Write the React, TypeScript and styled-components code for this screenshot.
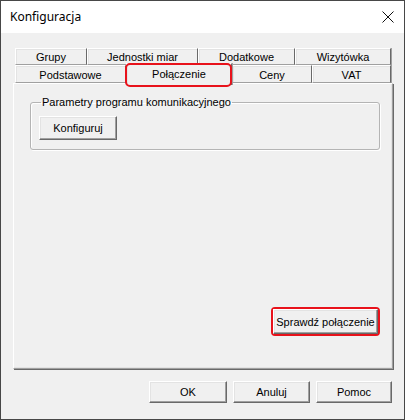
import styled, { createGlobalStyle } from "styled-components";

interface TabProps {
  w: number;
  active?: boolean;
  marked?: boolean;
}

const topTabs = [
  { label: "Grupy", w: 72 },
  { label: "Jednostki miar", w: 111 },
  { label: "Dodatkowe", w: 97 },
  { label: "Wizytówka", w: 96 },
];

const bottomTabs = [
  { label: "Podstawowe", w: 111 },
  { label: "Połączenie", w: 106, active: true },
  { label: "Ceny", w: 80 },
  { label: "VAT", w: 79 },
];

const App = () => {
  return (
    <>
      <GlobalStyle />
      <Window>
        <TitleBar>
          <Title>Konfiguracja</Title>
          <CloseButton>
            <svg width="12" height="12" viewBox="0 0 12 12">
              <path d="M0.5 0.5 L11.5 11.5 M11.5 0.5 L0.5 11.5" stroke="#111" strokeWidth="1" fill="none" />
            </svg>
          </CloseButton>
        </TitleBar>
        <Body>
          <TabStrip>
            <TabRow>
              {topTabs.map((t) => (
                <Tab key={t.label} w={t.w}>
                  {t.label}
                </Tab>
              ))}
            </TabRow>
            <TabRow>
              {bottomTabs.map((t) => (
                <Tab key={t.label} w={t.w} active={t.active} marked={t.active}>
                  {t.label}
                </Tab>
              ))}
            </TabRow>
          </TabStrip>
          <Panel>
            <Group>
              <Legend>Parametry programu komunikacyjnego</Legend>
              <Button w={78} h={24}>Konfiguruj</Button>
            </Group>
            <PanelFooter>
              <Highlight>
                <Button w={105} h={25}>Sprawdź połączenie</Button>
              </Highlight>
            </PanelFooter>
          </Panel>
          <DialogButtons>
            <Button w={78} h={22}>OK</Button>
            <Button w={77} h={22}>Anuluj</Button>
            <Button w={76} h={22}>Pomoc</Button>
          </DialogButtons>
        </Body>
      </Window>
    </>
  );
};

const GlobalStyle = createGlobalStyle`
  body {
    margin: 0;
    background: #ffffff;
  }
`;

const Window = styled.div`
  width: 405px;
  height: 420px;
  box-sizing: border-box;
  border: 1px solid #474747;
  display: flex;
  flex-direction: column;
  background: #f0f0f0;
  font-family: "Liberation Sans", Arial, sans-serif;
  font-size: 11px;
  color: #000;
`;

const TitleBar = styled.div`
  height: 32px;
  background: #ffffff;
  display: flex;
  align-items: center;
  padding: 0 0 0 9px;
`;

const Title = styled.div`
  flex: 1;
  font-family: "Noto Sans", "Open Sans", sans-serif;
  font-size: 12px;
  color: #000;
  padding-bottom: 1px;
`;

const CloseButton = styled.div`
  width: 46px;
  height: 32px;
  display: flex;
  align-items: center;
  justify-content: center;
  margin-right: -7px;
`;

const Body = styled.div`
  flex: 1;
  display: flex;
  flex-direction: column;
  padding: 15px 11px 0 12px;
`;

const TabStrip = styled.div`
  display: flex;
  flex-direction: column;
  margin: 0 2px;
  position: relative;
  z-index: 1;
`;

const TabRow = styled.div`
  display: flex;
  height: 17px;

  & + & {
    height: 18px;
  }
`;

const Tab = styled.div<TabProps>`
  position: relative;
  flex: 0 0 ${(p) => p.w}px;
  box-sizing: border-box;
  display: flex;
  align-items: center;
  justify-content: center;
  background: #f0f0f0;
  border: 1px solid #a0a0a0;
  border-right-color: #696969;
  border-left-color: #ffffff;
  border-top-color: #ffffff;
  box-shadow: inset 1px 1px 0 #e3e3e3, 1px 0 0 #a0a0a0;
  padding-top: 1px;
  ${(p) =>
    p.active &&
    `
    margin-top: -2px;
    height: 22px;
    border-bottom: none;
    padding-bottom: 2px;
    z-index: 2;
  `}

  ${(p) =>
    p.marked &&
    `
    &::after {
      content: "";
      position: absolute;
      left: -2px;
      right: -1px;
      top: -1px;
      bottom: -2px;
      border: 2px solid #e8121b;
      border-radius: 5px;
    }
  `}
`;

const Panel = styled.div`
  height: 286px;
  box-sizing: border-box;
  display: flex;
  flex-direction: column;
  border: 1px solid #a0a0a0;
  border-top-color: #ffffff;
  border-left-color: #ffffff;
  box-shadow: inset -1px -1px 0 #e3e3e3, 1px 1px 0 #696969;
  padding: 12px 12px 32px 16px;
`;

const Group = styled.fieldset`
  margin: 0;
  width: 350px;
  box-sizing: border-box;
  border: 1px solid #b4b4b4;
  border-radius: 3px;
  box-shadow: 1px 1px 0 #ffffff, inset 1px 1px 0 #ffffff;
  padding: 7px 8px 9px 8px;
`;

const Legend = styled.legend`
  padding: 0 1px;
  margin-left: 2px;
  line-height: 13px;
`;

const PanelFooter = styled.div`
  margin-top: auto;
  display: flex;
  justify-content: flex-end;
`;

const Highlight = styled.span`
  display: inline-flex;
  border: 2px solid #e8121b;
  border-radius: 4px;
`;

const Button = styled.button<{ w: number; h: number }>`
  width: ${(p) => p.w}px;
  height: ${(p) => p.h}px;
  box-sizing: border-box;
  padding: 0;
  font-family: "Liberation Sans", Arial, sans-serif;
  font-size: 11px;
  color: #000;
  background: #f0f0f0;
  border: 1px solid;
  border-color: #ffffff #696969 #696969 #ffffff;
  box-shadow: inset -1px -1px 0 #a0a0a0, inset 1px 1px 0 #e3e3e3;
  white-space: nowrap;
`;

const DialogButtons = styled.div`
  display: flex;
  justify-content: flex-end;
  gap: 6px;
  margin-top: 12px;
  padding-right: 1px;
`;

export default App;
